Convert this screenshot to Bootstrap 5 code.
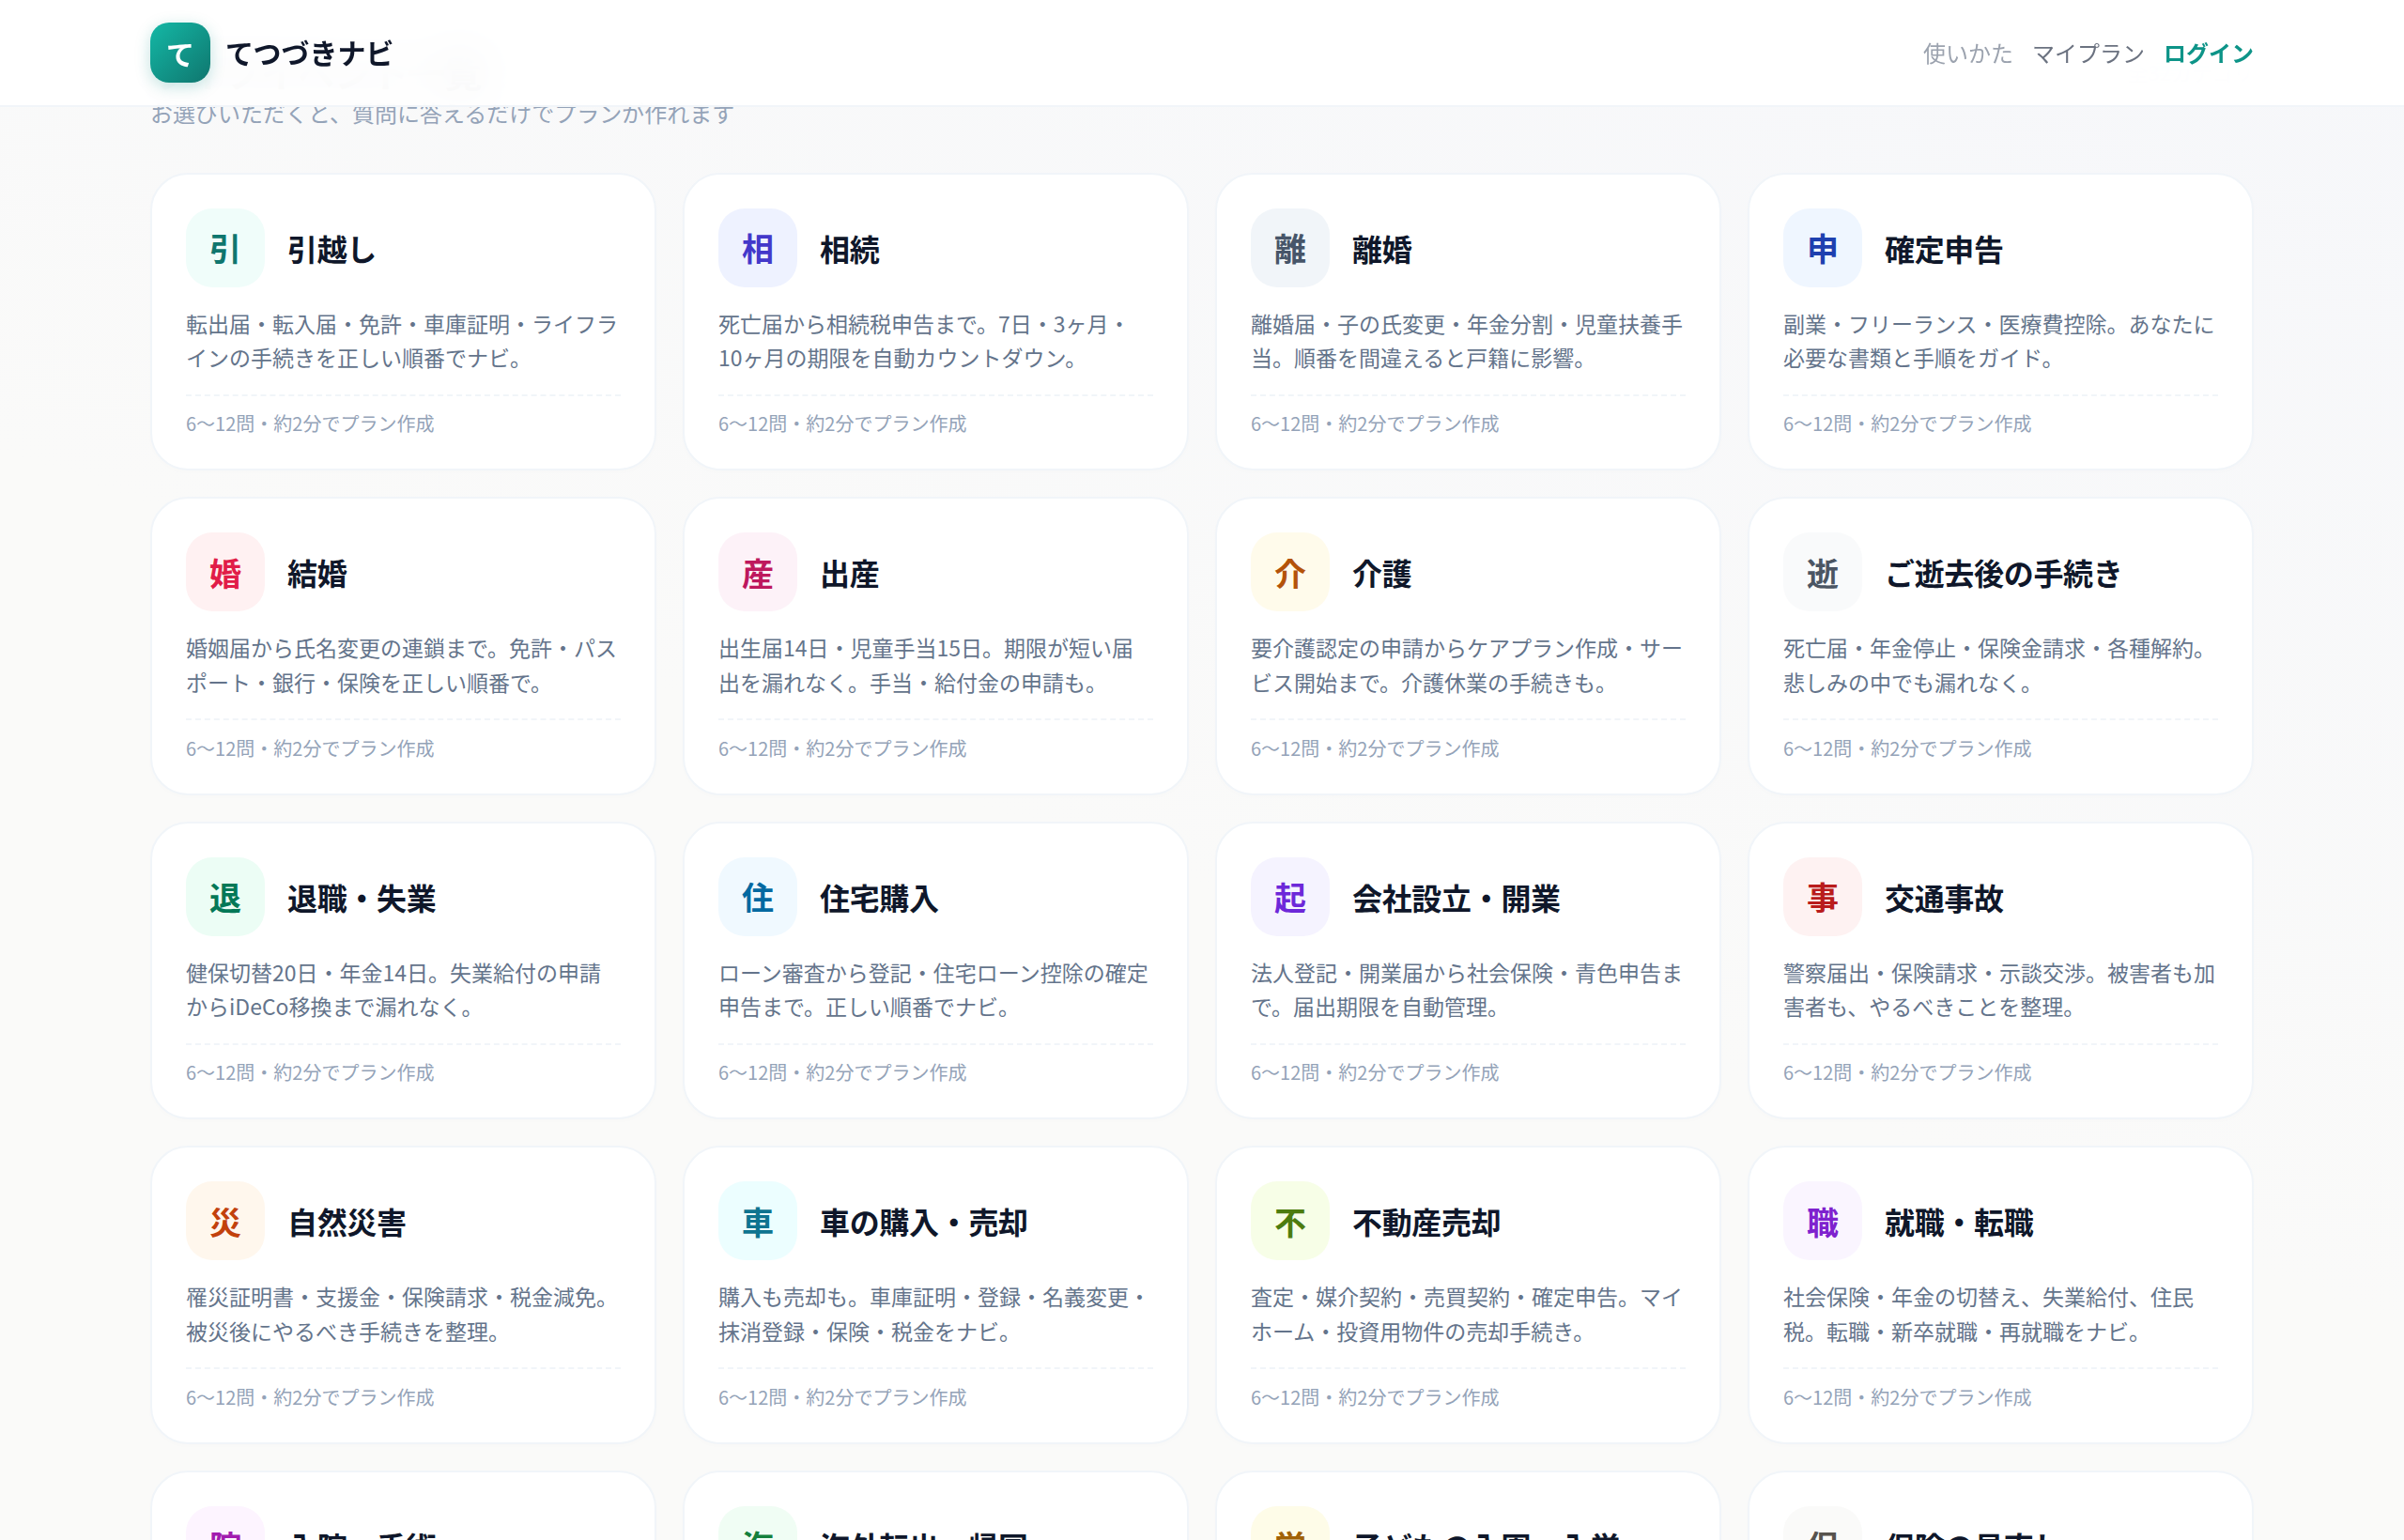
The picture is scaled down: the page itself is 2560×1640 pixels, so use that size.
<!DOCTYPE html>
<html lang="ja">
  <head>
    <meta charset="UTF-8" />
    <meta name="viewport" content="width=device-width, initial-scale=1" />
    <title>てつづきナビ</title>
    <link
      href="https://cdn.jsdelivr.net/npm/bootstrap@5.3.3/dist/css/bootstrap.min.css"
      rel="stylesheet"
    />
    <style>
      html,
      body {
        height: 100%;
        overflow: hidden;
      }

      body {
        font-family: "Noto Sans CJK JP", "Noto Sans", sans-serif;
        background: linear-gradient(200deg, #f6f7fa 0%, #fafaf9 55%);
        color: #0f172a;
      }

      .container {
        max-width: 2240px;
        padding-left: 0;
        padding-right: 0;
      }

      /* ヘッダー */
      .top-bar {
        height: 114px;
        padding: 0;
        background: rgba(255, 255, 255, 0.94);
        backdrop-filter: blur(24px);
        border-bottom: 2px solid #f1f5f9;
      }

      .logo-mark {
        width: 64px;
        height: 64px;
        border-radius: 20px;
        background: linear-gradient(135deg, #14b8a6, #0f766e);
        box-shadow: 0 4px 16px rgba(13, 148, 136, 0.25);
        color: #fff;
        font-size: 30px;
        font-weight: 700;
      }

      .logo-name {
        font-size: 30px;
        font-weight: 700;
        line-height: 1.3;
        color: #0f172a;
        padding-bottom: 2px;
      }

      .top-links {
        gap: 20px;
      }

      .top-links .nav-link {
        padding: 0;
        font-size: 24px;
        color: #6b7280;
      }

      .top-links .nav-link.is-muted {
        color: #9ca3af;
      }

      .top-links .nav-link.is-login {
        color: #0d9488;
        font-weight: 700;
      }

      /* 見出し */
      .page-main {
        padding-top: 50px;
      }

      .page-title {
        font-size: 40px;
        line-height: 52px;
        font-weight: 700;
        letter-spacing: -0.02em;
        margin: 0;
      }

      .page-sub {
        font-size: 24px;
        line-height: 36px;
        color: #94a3b8;
        margin: 0 0 45.5px;
      }

      .page-count {
        font-size: 22px;
        color: #94a3b8;
      }

      /* カード */
      .plan-grid {
        --bs-gutter-x: 28px;
        --bs-gutter-y: 28px;
      }

      .plan-card {
        border: 2px solid #f1f5f9;
        border-radius: 40px;
        box-shadow: 0 2px 6px rgba(15, 23, 42, 0.01);
        padding: 36px 36px 33px;
      }

      .plan-icon {
        width: 84px;
        height: 84px;
        border-radius: 28px;
        font-size: 34px;
        font-weight: 700;
      }

      .plan-title {
        font-size: 32px;
        font-weight: 700;
        line-height: 1.4;
        letter-spacing: -0.01em;
        color: #0f172a;
        margin: 0;
        padding-top: 1px;
      }

      .plan-desc {
        font-size: 23px;
        line-height: 36.5px;
        color: #64748b;
        margin: 20px 0 21px;
      }

      .plan-meta {
        border-top: 2px dashed #f1f5f9;
        padding-top: 14.5px;
        font-size: 20px;
        line-height: 30px;
        color: #94a3b8;
      }

      .tone-teal { background: #f0fdfa; color: #0f766e; }
      .tone-indigo { background: #eef2ff; color: #4338ca; }
      .tone-slate { background: #f1f5f9; color: #475569; }
      .tone-blue { background: #eff6ff; color: #1e40af; }
      .tone-rose { background: #fff1f2; color: #e11d48; }
      .tone-pink { background: #fdf2f8; color: #be185d; }
      .tone-amber { background: #fffbeb; color: #b45309; }
      .tone-gray { background: #f9fafb; color: #4b5563; }
      .tone-emerald { background: #ecfdf5; color: #047857; }
      .tone-sky { background: #f0f9ff; color: #0369a1; }
      .tone-violet { background: #f5f3ff; color: #6d28d9; }
      .tone-red { background: #fef2f2; color: #b91c1c; }
      .tone-orange { background: #fff7ed; color: #c2410c; }
      .tone-cyan { background: #ecfeff; color: #0e7490; }
      .tone-lime { background: #f7fee7; color: #4d7c0f; }
      .tone-purple { background: #faf5ff; color: #7e22ce; }
      .tone-fuchsia { background: #fdf4ff; color: #a21caf; }
      .tone-green { background: #f0fdf4; color: #15803d; }
      .tone-yellow { background: #fefce8; color: #a16207; }
      .tone-stone { background: #fafaf9; color: #57534e; }
    </style>
  </head>
  <body>
    <nav class="navbar fixed-top top-bar">
      <div class="container d-flex justify-content-between align-items-center">
        <a class="d-flex align-items-center gap-3 text-decoration-none" href="#">
          <span class="logo-mark d-flex align-items-center justify-content-center">て</span>
          <span class="logo-name">てつづきナビ</span>
        </a>
        <div class="nav top-links">
          <a class="nav-link is-muted" href="#">使いかた</a>
          <a class="nav-link" href="#">マイプラン</a>
          <a class="nav-link is-login" href="#">ログイン</a>
        </div>
      </div>
    </nav>

    <main class="container page-main">
      <div class="d-flex justify-content-between align-items-center">
        <h1 class="page-title">ライフイベント一覧</h1>
        <span class="page-count">全32カテゴリ</span>
      </div>
      <p class="page-sub">お選びいただくと、質問に答えるだけでプランが作れます</p>

      <div class="row row-cols-4 plan-grid">
        <div class="col">
          <div class="card h-100 plan-card">
            <div class="d-flex align-items-center gap-4">
              <span class="plan-icon tone-teal d-flex align-items-center justify-content-center">引</span>
              <h2 class="plan-title">引越し</h2>
            </div>
            <p class="plan-desc">転出届・転入届・免許・車庫証明・ライフラインの手続きを正しい順番でナビ。</p>
            <div class="plan-meta">6〜12問・約2分でプラン作成</div>
          </div>
        </div>
        <div class="col">
          <div class="card h-100 plan-card">
            <div class="d-flex align-items-center gap-4">
              <span class="plan-icon tone-indigo d-flex align-items-center justify-content-center">相</span>
              <h2 class="plan-title">相続</h2>
            </div>
            <p class="plan-desc">死亡届から相続税申告まで。7日・3ヶ月・10ヶ月の期限を自動カウントダウン。</p>
            <div class="plan-meta">6〜12問・約2分でプラン作成</div>
          </div>
        </div>
        <div class="col">
          <div class="card h-100 plan-card">
            <div class="d-flex align-items-center gap-4">
              <span class="plan-icon tone-slate d-flex align-items-center justify-content-center">離</span>
              <h2 class="plan-title">離婚</h2>
            </div>
            <p class="plan-desc">離婚届・子の氏変更・年金分割・児童扶養手当。順番を間違えると戸籍に影響。</p>
            <div class="plan-meta">6〜12問・約2分でプラン作成</div>
          </div>
        </div>
        <div class="col">
          <div class="card h-100 plan-card">
            <div class="d-flex align-items-center gap-4">
              <span class="plan-icon tone-blue d-flex align-items-center justify-content-center">申</span>
              <h2 class="plan-title">確定申告</h2>
            </div>
            <p class="plan-desc">副業・フリーランス・医療費控除。あなたに必要な書類と手順をガイド。</p>
            <div class="plan-meta">6〜12問・約2分でプラン作成</div>
          </div>
        </div>

        <div class="col">
          <div class="card h-100 plan-card">
            <div class="d-flex align-items-center gap-4">
              <span class="plan-icon tone-rose d-flex align-items-center justify-content-center">婚</span>
              <h2 class="plan-title">結婚</h2>
            </div>
            <p class="plan-desc">婚姻届から氏名変更の連鎖まで。免許・パスポート・銀行・保険を正しい順番で。</p>
            <div class="plan-meta">6〜12問・約2分でプラン作成</div>
          </div>
        </div>
        <div class="col">
          <div class="card h-100 plan-card">
            <div class="d-flex align-items-center gap-4">
              <span class="plan-icon tone-pink d-flex align-items-center justify-content-center">産</span>
              <h2 class="plan-title">出産</h2>
            </div>
            <p class="plan-desc">出生届14日・児童手当15日。期限が短い届出を漏れなく。手当・給付金の申請も。</p>
            <div class="plan-meta">6〜12問・約2分でプラン作成</div>
          </div>
        </div>
        <div class="col">
          <div class="card h-100 plan-card">
            <div class="d-flex align-items-center gap-4">
              <span class="plan-icon tone-amber d-flex align-items-center justify-content-center">介</span>
              <h2 class="plan-title">介護</h2>
            </div>
            <p class="plan-desc">要介護認定の申請からケアプラン作成・サービス開始まで。介護休業の手続きも。</p>
            <div class="plan-meta">6〜12問・約2分でプラン作成</div>
          </div>
        </div>
        <div class="col">
          <div class="card h-100 plan-card">
            <div class="d-flex align-items-center gap-4">
              <span class="plan-icon tone-gray d-flex align-items-center justify-content-center">逝</span>
              <h2 class="plan-title">ご逝去後の手続き</h2>
            </div>
            <p class="plan-desc">死亡届・年金停止・保険金請求・各種解約。悲しみの中でも漏れなく。</p>
            <div class="plan-meta">6〜12問・約2分でプラン作成</div>
          </div>
        </div>

        <div class="col">
          <div class="card h-100 plan-card">
            <div class="d-flex align-items-center gap-4">
              <span class="plan-icon tone-emerald d-flex align-items-center justify-content-center">退</span>
              <h2 class="plan-title">退職・失業</h2>
            </div>
            <p class="plan-desc">健保切替20日・年金14日。失業給付の申請からiDeCo移換まで漏れなく。</p>
            <div class="plan-meta">6〜12問・約2分でプラン作成</div>
          </div>
        </div>
        <div class="col">
          <div class="card h-100 plan-card">
            <div class="d-flex align-items-center gap-4">
              <span class="plan-icon tone-sky d-flex align-items-center justify-content-center">住</span>
              <h2 class="plan-title">住宅購入</h2>
            </div>
            <p class="plan-desc">ローン審査から登記・住宅ローン控除の確定申告まで。正しい順番でナビ。</p>
            <div class="plan-meta">6〜12問・約2分でプラン作成</div>
          </div>
        </div>
        <div class="col">
          <div class="card h-100 plan-card">
            <div class="d-flex align-items-center gap-4">
              <span class="plan-icon tone-violet d-flex align-items-center justify-content-center">起</span>
              <h2 class="plan-title">会社設立・開業</h2>
            </div>
            <p class="plan-desc">法人登記・開業届から社会保険・青色申告まで。届出期限を自動管理。</p>
            <div class="plan-meta">6〜12問・約2分でプラン作成</div>
          </div>
        </div>
        <div class="col">
          <div class="card h-100 plan-card">
            <div class="d-flex align-items-center gap-4">
              <span class="plan-icon tone-red d-flex align-items-center justify-content-center">事</span>
              <h2 class="plan-title">交通事故</h2>
            </div>
            <p class="plan-desc">警察届出・保険請求・示談交渉。被害者も加害者も、やるべきことを整理。</p>
            <div class="plan-meta">6〜12問・約2分でプラン作成</div>
          </div>
        </div>

        <div class="col">
          <div class="card h-100 plan-card">
            <div class="d-flex align-items-center gap-4">
              <span class="plan-icon tone-orange d-flex align-items-center justify-content-center">災</span>
              <h2 class="plan-title">自然災害</h2>
            </div>
            <p class="plan-desc">罹災証明書・支援金・保険請求・税金減免。被災後にやるべき手続きを整理。</p>
            <div class="plan-meta">6〜12問・約2分でプラン作成</div>
          </div>
        </div>
        <div class="col">
          <div class="card h-100 plan-card">
            <div class="d-flex align-items-center gap-4">
              <span class="plan-icon tone-cyan d-flex align-items-center justify-content-center">車</span>
              <h2 class="plan-title">車の購入・売却</h2>
            </div>
            <p class="plan-desc">購入も売却も。車庫証明・登録・名義変更・抹消登録・保険・税金をナビ。</p>
            <div class="plan-meta">6〜12問・約2分でプラン作成</div>
          </div>
        </div>
        <div class="col">
          <div class="card h-100 plan-card">
            <div class="d-flex align-items-center gap-4">
              <span class="plan-icon tone-lime d-flex align-items-center justify-content-center">不</span>
              <h2 class="plan-title">不動産売却</h2>
            </div>
            <p class="plan-desc">査定・媒介契約・売買契約・確定申告。マイホーム・投資用物件の売却手続き。</p>
            <div class="plan-meta">6〜12問・約2分でプラン作成</div>
          </div>
        </div>
        <div class="col">
          <div class="card h-100 plan-card">
            <div class="d-flex align-items-center gap-4">
              <span class="plan-icon tone-purple d-flex align-items-center justify-content-center">職</span>
              <h2 class="plan-title">就職・転職</h2>
            </div>
            <p class="plan-desc">社会保険・年金の切替え、失業給付、住民税。転職・新卒就職・再就職をナビ。</p>
            <div class="plan-meta">6〜12問・約2分でプラン作成</div>
          </div>
        </div>

        <div class="col">
          <div class="card h-100 plan-card">
            <div class="d-flex align-items-center gap-4">
              <span class="plan-icon tone-fuchsia d-flex align-items-center justify-content-center">院</span>
              <h2 class="plan-title">入院・手術</h2>
            </div>
          </div>
        </div>
        <div class="col">
          <div class="card h-100 plan-card">
            <div class="d-flex align-items-center gap-4">
              <span class="plan-icon tone-green d-flex align-items-center justify-content-center">海</span>
              <h2 class="plan-title">海外転出・帰国</h2>
            </div>
          </div>
        </div>
        <div class="col">
          <div class="card h-100 plan-card">
            <div class="d-flex align-items-center gap-4">
              <span class="plan-icon tone-yellow d-flex align-items-center justify-content-center">学</span>
              <h2 class="plan-title">子どもの入園・入学</h2>
            </div>
          </div>
        </div>
        <div class="col">
          <div class="card h-100 plan-card">
            <div class="d-flex align-items-center gap-4">
              <span class="plan-icon tone-stone d-flex align-items-center justify-content-center">保</span>
              <h2 class="plan-title">保険の見直し</h2>
            </div>
          </div>
        </div>
      </div>
    </main>

    <script src="https://cdn.jsdelivr.net/npm/bootstrap@5.3.3/dist/js/bootstrap.bundle.min.js"></script>
  </body>
</html>
